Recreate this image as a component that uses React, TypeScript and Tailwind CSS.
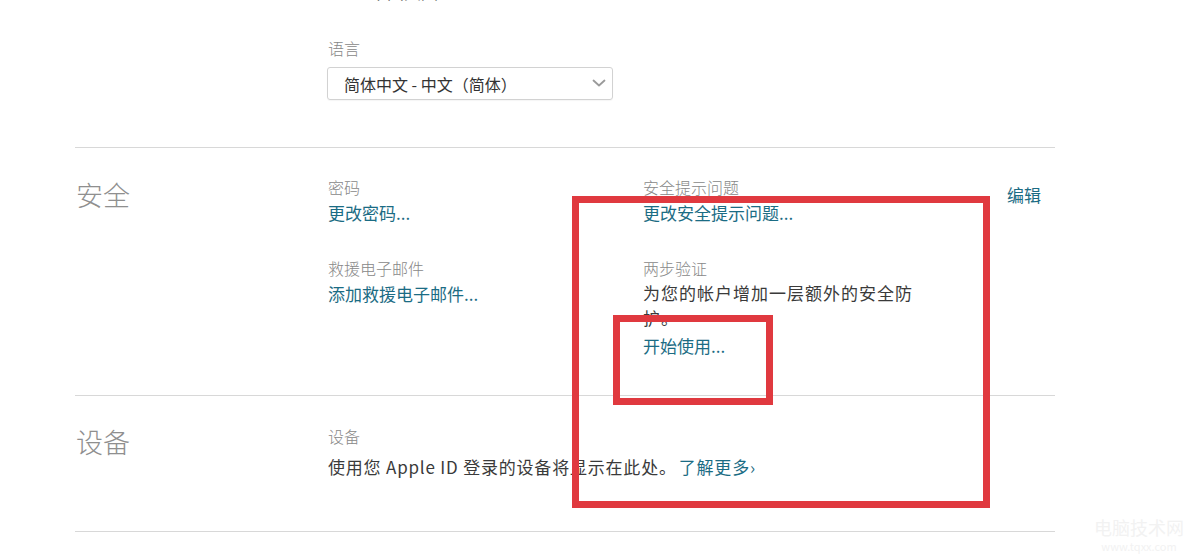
export default function App() {
  return (
    <div className="relative w-[1196px] h-[557px] overflow-hidden bg-white font-['Noto_Sans_CJK_SC','Noto_Sans',sans-serif] text-[#333]">
      {/* row cut off by the top of the screenshot */}
      <div className="h-[5px] overflow-hidden pl-[370px]">
        <p className="-mt-[21px] text-[17px] leading-[26px] text-[#555]">中国大陆</p>
      </div>

      {/* language */}
      <div className="pl-[327px] pt-[32px] pb-[47px]">
        <p className="pl-px text-[16px] leading-[22px] font-light text-[#888]">语言</p>
        <div className="mt-[8px] flex h-[33px] w-[286px] items-center justify-between rounded-[3px] border border-[#d2d2d2] pl-[16px] pr-[6px] shadow-[0_1px_1px_rgba(0,0,0,0.04)]">
          <span className="text-[16px] leading-[22px] text-[#333]">简体中文 - 中文（简体）</span>
          <svg width="14" height="9" viewBox="0 0 14 9" fill="none">
            <path d="M1.5 1.5 L7 6.5 L12.5 1.5" stroke="#9a9a9a" strokeWidth="1.8" strokeLinecap="round" strokeLinejoin="round" />
          </svg>
        </div>
      </div>

      {/* security */}
      <section className="ml-[75px] flex h-[248px] w-[980px] border-t border-[#d8d8d8] pt-[28px]">
        <h2 className="mt-[3px] w-[253px] pl-px text-[27px] leading-[32px] font-light text-[#8f8f8f]">安全</h2>
        <div className="w-[315px]">
          <p className="text-[16px] leading-[22px] font-light text-[#888]">密码</p>
          <p className="mt-[2px] text-[17px] leading-[26px] text-[#1b6c84]">更改密码...</p>
          <p className="mt-[31px] text-[16px] leading-[22px] font-light text-[#888]">救援电子邮件</p>
          <p className="mt-[2px] text-[17px] leading-[26px] text-[#1b6c84]">添加救援电子邮件...</p>
        </div>
        <div className="w-[364px]">
          <p className="text-[16px] leading-[22px] font-light text-[#888]">安全提示问题</p>
          <p className="mt-[2px] text-[17px] leading-[26px] text-[#1b6c84]">更改安全提示问题...</p>
          <p className="mt-[31px] text-[16px] leading-[22px] font-light text-[#888]">两步验证</p>
          <p className="mt-[1px] w-[280px] text-[17px] leading-[25px] tracking-[1px] text-[#3a3a3a]">为您的帐户增加一层额外的安全防护。</p>
          <p className="mt-[3px] text-[17px] leading-[26px] text-[#1b6c84]">开始使用...</p>
        </div>
        <div className="pt-[6px]">
          <p className="text-[17px] leading-[26px] text-[#1b6c84]">编辑</p>
        </div>
      </section>

      {/* devices */}
      <section className="ml-[75px] flex h-[137px] w-[980px] border-y border-[#d8d8d8] pt-[29px]">
        <h2 className="mt-px w-[253px] pl-px text-[27px] leading-[32px] font-light text-[#8f8f8f]">设备</h2>
        <div>
          <p className="text-[16px] leading-[22px] font-light text-[#888]">设备</p>
          <p className="mt-[7px] text-[17px] leading-[26px] tracking-[0.8px] text-[#3a3a3a]">
            使用您 Apple ID 登录的设备将显示在此处。
            <span className="ml-[2px] text-[#1b6c84]">了解更多›</span>
          </p>
        </div>
      </section>

      {/* watermark */}
      <div className="absolute right-[12px] bottom-[4px] flex flex-col items-center text-[#f2f2f2]">
        <span className="text-[18px] leading-[24px]">电脑技术网</span>
        <span className="text-[11px] leading-[14px]">www.tqxx.com</span>
      </div>

      {/* red annotation boxes */}
      <div className="absolute left-[572px] top-[196px] h-[312px] w-[418px] border-[7px] border-[#e0393f]" />
      <div className="absolute left-[613px] top-[315px] h-[90px] w-[160px] border-[7px] border-[#e0393f]" />
    </div>
  );
}
